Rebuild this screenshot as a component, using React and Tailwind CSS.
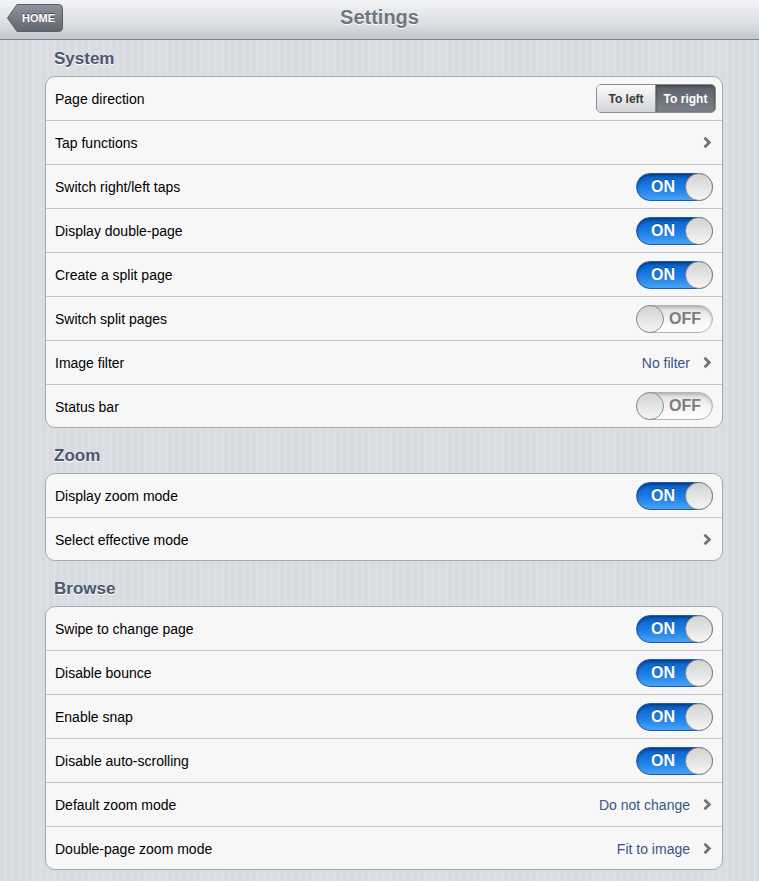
import React from 'react';

const Chevron = () => (
    <svg width="10" height="13" viewBox="0 0 10 13" className="text-[#737373]">
        <path d="M2.5 1.8 7.3 6.5 2.5 11.2" fill="none" stroke="currentColor" strokeWidth="2.8" />
    </svg>
);

const Toggle = ({ on }) =>
    on ? (
        <div className="relative w-[77px] h-[28px] mr-[-1px] rounded-full border border-[#1e58ad] bg-[linear-gradient(#0a5ec8,#1b7fe6_55%,#4aa3f5)] shadow-[inset_0_2px_3px_rgba(0,0,0,0.35)] flex items-center">
            <span className="pl-[14px] text-white font-bold text-[16px] [text-shadow:0_-1px_0_rgba(0,0,0,0.35)]">ON</span>
            <div className="absolute right-[-1px] top-[-1px] w-[28px] h-[28px] rounded-full border border-[#8c8c8c] bg-[linear-gradient(#d2d2d2,#f6f6f6)]" />
        </div>
    ) : (
        <div className="relative w-[77px] h-[28px] mr-[-1px] rounded-full border border-[#b3b3b3] bg-[linear-gradient(#dedede,#f4f4f4_50%,#ffffff)] shadow-[inset_0_2px_3px_rgba(0,0,0,0.18)] flex items-center justify-end">
            <span className="pr-[11px] text-[#7d7d7d] font-bold text-[16px]">OFF</span>
            <div className="absolute left-[-1px] top-[-1px] w-[28px] h-[28px] rounded-full border border-[#8c8c8c] bg-[linear-gradient(#d2d2d2,#f6f6f6)]" />
        </div>
    );

const Segmented = () => (
    <div className="flex h-[29px] rounded-[5px] border border-[#8a8d92] overflow-hidden text-[12px] font-bold mr-[-4px]">
        <div className="w-[59px] flex items-center justify-center bg-[linear-gradient(#fbfbfb,#d3d5d9)] text-[#3a3a3a] border-r border-[#8a8d92]">To left</div>
        <div className="w-[59px] flex items-center justify-center bg-[linear-gradient(#5c6169,#7c818a)] text-white shadow-[inset_0_1px_3px_rgba(0,0,0,0.4)]">To right</div>
    </div>
);

const Row = ({ label, children, first, last }) => (
    <div className={`${first || last ? 'h-[43px]' : 'h-[44px]'} flex items-center justify-between pl-[9px] pr-[10px] ${first ? '' : 'border-t border-[#c5c5c7]'}`}>
        <span className="text-[14px] text-black pt-[2px]">{label}</span>
        <div className="flex items-center">{children}</div>
    </div>
);

const Link = ({ value }) => (
    <>
        {value && <span className="text-[14px] text-[#3a5488] mr-[12px] pt-[2px]">{value}</span>}
        <Chevron />
    </>
);

const Header = ({ title, first }) => (
    <div className={`${first ? 'h-[36px]' : 'h-[45px]'} flex items-end pb-[7px] pl-[54px]`}>
        <h2 className="text-[17px] leading-[20px] font-bold text-[#4c566e] [text-shadow:0_1px_0_#ffffff]">{title}</h2>
    </div>
);

const Group = ({ children }) => (
    <div className="ml-[45px] w-[678px] bg-[#f7f7f7] border border-[#a8aaad] rounded-[10px] overflow-hidden">{children}</div>
);

const App = () => {
    return (
        <div className="w-[759px] min-h-[881px] font-['Liberation_Sans',Arial,sans-serif] bg-[repeating-linear-gradient(90deg,#d8dbe0_0px,#d8dbe0_4px,#dcdfe4_4px,#dcdfe4_7px)]">
            {/* Nav bar */}
            <div className="relative h-[40px] flex items-center justify-center pb-[5px] bg-[linear-gradient(#f3f4f6,#dcdee3_60%,#c3c6ce)] border-b border-[#7c818c]">
                <div className="absolute left-[7px] top-[4px] w-[56px] h-[28px]">
                    <svg width="56" height="28" viewBox="0 0 56 28" className="absolute inset-0">
                        <defs>
                            <linearGradient id="hb" x1="0" y1="0" x2="0" y2="1">
                                <stop offset="0" stopColor="#8f939b" />
                                <stop offset="1" stopColor="#61656d" />
                            </linearGradient>
                        </defs>
                        <path d="M0.5 14 10 0.5H51.5Q55.5 0.5 55.5 4.5V23.5Q55.5 27.5 51.5 27.5H10Z" fill="url(#hb)" stroke="#5a5e66" />
                    </svg>
                    <span className="absolute inset-0 flex items-center justify-end pr-[8px] text-white text-[11px] font-bold [text-shadow:0_-1px_0_rgba(0,0,0,0.45)]">HOME</span>
                </div>
                <h1 className="text-[20px] font-bold text-[#6f7682] [text-shadow:0_1px_0_#ffffff]">Settings</h1>
            </div>

            <Header title="System" first />
            <Group>
                <Row label="Page direction" first><Segmented /></Row>
                <Row label="Tap functions"><Link /></Row>
                <Row label="Switch right/left taps"><Toggle on /></Row>
                <Row label="Display double-page"><Toggle on /></Row>
                <Row label="Create a split page"><Toggle on /></Row>
                <Row label="Switch split pages"><Toggle /></Row>
                <Row label="Image filter"><Link value="No filter" /></Row>
                <Row label="Status bar" last><Toggle /></Row>
            </Group>

            <Header title="Zoom" />
            <Group>
                <Row label="Display zoom mode" first><Toggle on /></Row>
                <Row label="Select effective mode" last><Link /></Row>
            </Group>

            <Header title="Browse" />
            <Group>
                <Row label="Swipe to change page" first><Toggle on /></Row>
                <Row label="Disable bounce"><Toggle on /></Row>
                <Row label="Enable snap"><Toggle on /></Row>
                <Row label="Disable auto-scrolling"><Toggle on /></Row>
                <Row label="Default zoom mode"><Link value="Do not change" /></Row>
                <Row label="Double-page zoom mode" last><Link value="Fit to image" /></Row>
            </Group>
        </div>
    );
};

export default App;
